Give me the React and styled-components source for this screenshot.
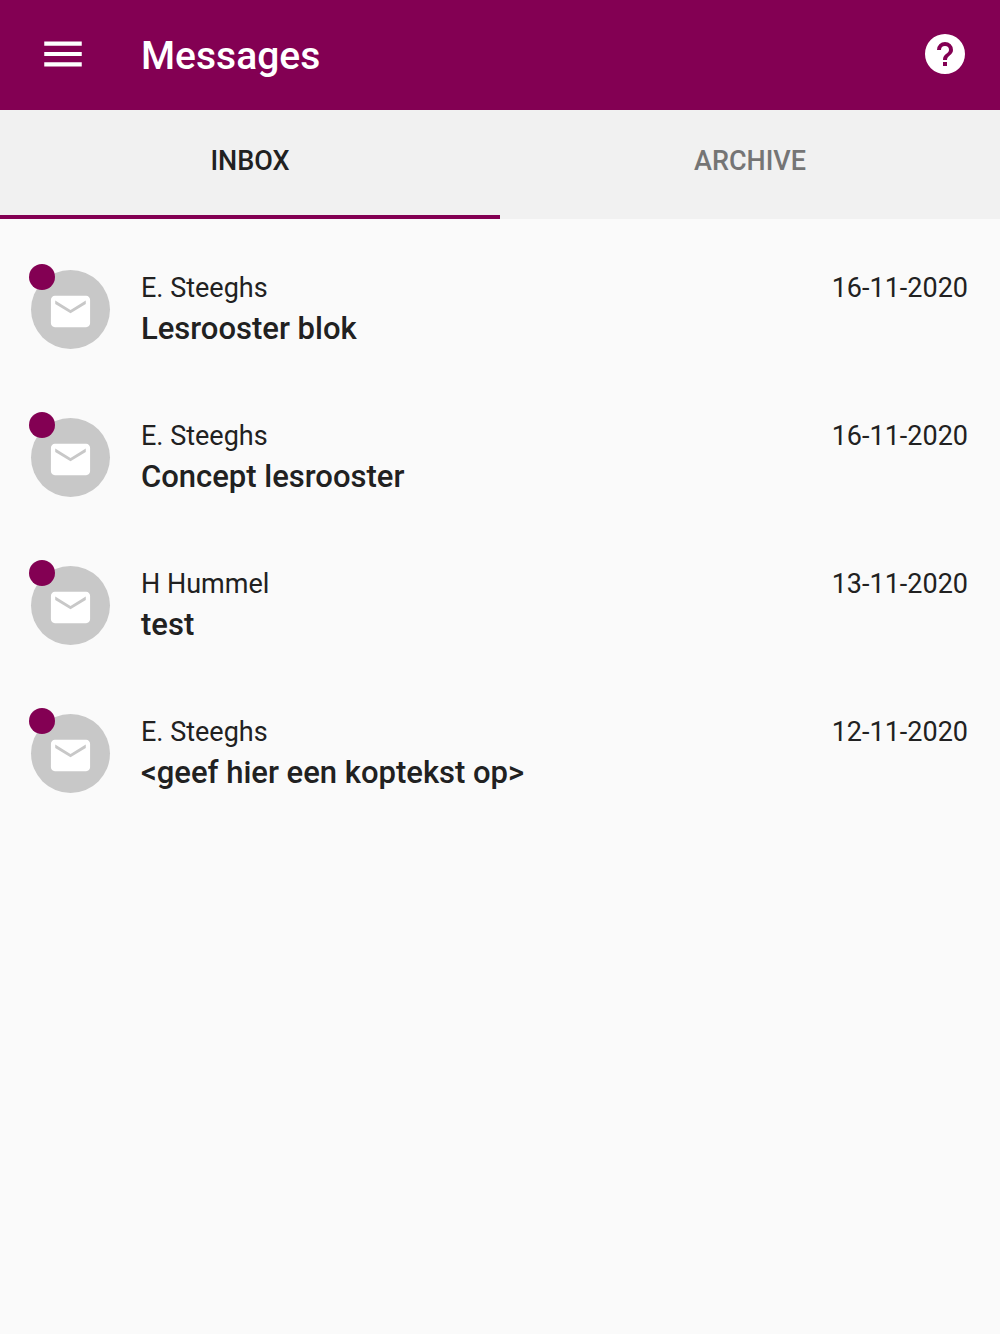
import React, { useState } from "react";
import styled, { createGlobalStyle } from "styled-components";

const ACCENT = "#830053";

const GlobalStyle = createGlobalStyle`
  *, *::before, *::after { box-sizing: border-box; }
  body {
    margin: 0;
    background: #fafafa;
    color: #212121;
    font-family: Roboto, "Noto Sans", sans-serif;
  }
`;

const Page = styled.div`
  display: flex;
  flex-direction: column;
  min-height: 100vh;
`;

const AppBar = styled.header`
  display: flex;
  align-items: center;
  height: 110px;
  padding: 0 31px 2px 38px;
  background: ${ACCENT};
  color: #fff;
`;

const IconButton = styled.button`
  display: flex;
  flex: none;
  padding: 0;
  border: 0;
  background: none;
  color: inherit;
  cursor: pointer;
`;

const Title = styled.h1`
  flex: 1;
  margin: 0;
  padding: 4px 0 0 53px;
  font-size: 39px;
  line-height: 48px;
  font-weight: 500;
`;

const Tabs = styled.div`
  display: flex;
  background: #f1f1f1;
`;

const Tab = styled.button`
  flex: 1;
  height: 109px;
  padding: 0 0 4px;
  border: 0;
  border-bottom: 4px solid ${(p) => (p.$active ? ACCENT : "transparent")};
  background: none;
  color: ${(p) => (p.$active ? "#212121" : "#757575")};
  font: 500 27px/32px Roboto, "Noto Sans", sans-serif;
  text-transform: uppercase;
  cursor: pointer;
`;

const List = styled.ul`
  display: flex;
  flex: 1;
  flex-direction: column;
  margin: 0;
  padding: 51px 32px 32px 31px;
  list-style: none;
`;

const Row = styled.li`
  display: flex;
  align-items: flex-start;
  min-height: 148px;
`;

const Avatar = styled.div`
  position: relative;
  display: flex;
  flex: none;
  align-items: center;
  justify-content: center;
  width: 79px;
  height: 79px;
  margin-right: 31px;
  padding-top: 3px;
  border-radius: 50%;
  background: #c8c8c8;
  color: #fff;
`;

const UnreadDot = styled.span`
  position: absolute;
  top: -6px;
  left: -2px;
  width: 26px;
  height: 26px;
  border-radius: 50%;
  background: ${ACCENT};
`;

const Summary = styled.div`
  flex: 1;
  min-width: 0;
`;

const Sender = styled.div`
  font-size: 27px;
  line-height: 36px;
`;

const Subject = styled.div`
  font-size: 31px;
  line-height: 46px;
  font-weight: 500;
`;

const SentDate = styled.time`
  flex: none;
  font-size: 27px;
  line-height: 36px;
`;

const Glyph = ({ size, d }) => (
  <svg width={size} height={size} viewBox="0 0 24 24" fill="currentColor" fillRule="evenodd" aria-hidden="true">
    <path d={d} />
  </svg>
);

const MENU = "M3 18h18v-2H3v2zm0-5h18v-2H3v2zm0-7v2h18V6H3z";
const HELP =
  "M12 2a10 10 0 1 0 0 20a10 10 0 0 0 0-20zM11 16h2v2h-2zM11 15c0-3.25 3-3 3-5a2 2 0 0 0-4 0H8a4 4 0 0 1 8 0c0 2.5-3 2.75-3 5z";
const MAIL =
  "M20 4H4c-1.1 0-1.99.9-1.99 2L2 18c0 1.1.9 2 2 2h16c1.1 0 2-.9 2-2V6c0-1.1-.9-2-2-2zm-.2 4.2l-7.8 4.7-7.8-4.7V6.4L12 11.2l7.8-4.8z";

const MESSAGES = [
  { id: 1, sender: "E. Steeghs", subject: "Lesrooster blok", date: "16-11-2020" },
  { id: 2, sender: "E. Steeghs", subject: "Concept lesrooster", date: "16-11-2020" },
  { id: 3, sender: "H Hummel", subject: "test", date: "13-11-2020" },
  { id: 4, sender: "E. Steeghs", subject: "<geef hier een koptekst op>", date: "12-11-2020" },
];

export default function App() {
  const [tab, setTab] = useState("Inbox");
  return (
    <Page>
      <GlobalStyle />
      <AppBar>
        <IconButton type="button" aria-label="Menu">
          <Glyph size={50} d={MENU} />
        </IconButton>
        <Title>Messages</Title>
        <IconButton type="button" aria-label="Help">
          <Glyph size={48} d={HELP} />
        </IconButton>
      </AppBar>
      <Tabs role="tablist">
        {["Inbox", "Archive"].map((name) => (
          <Tab
            key={name}
            type="button"
            role="tab"
            aria-selected={tab === name}
            $active={tab === name}
            onClick={() => setTab(name)}
          >
            {name}
          </Tab>
        ))}
      </Tabs>
      <List>
        {tab === "Inbox" &&
          MESSAGES.map((m) => (
            <Row key={m.id}>
              <Avatar>
                <Glyph size={47} d={MAIL} />
                <UnreadDot />
              </Avatar>
              <Summary>
                <Sender>{m.sender}</Sender>
                <Subject>{m.subject}</Subject>
              </Summary>
              <SentDate>{m.date}</SentDate>
            </Row>
          ))}
      </List>
    </Page>
  );
}
